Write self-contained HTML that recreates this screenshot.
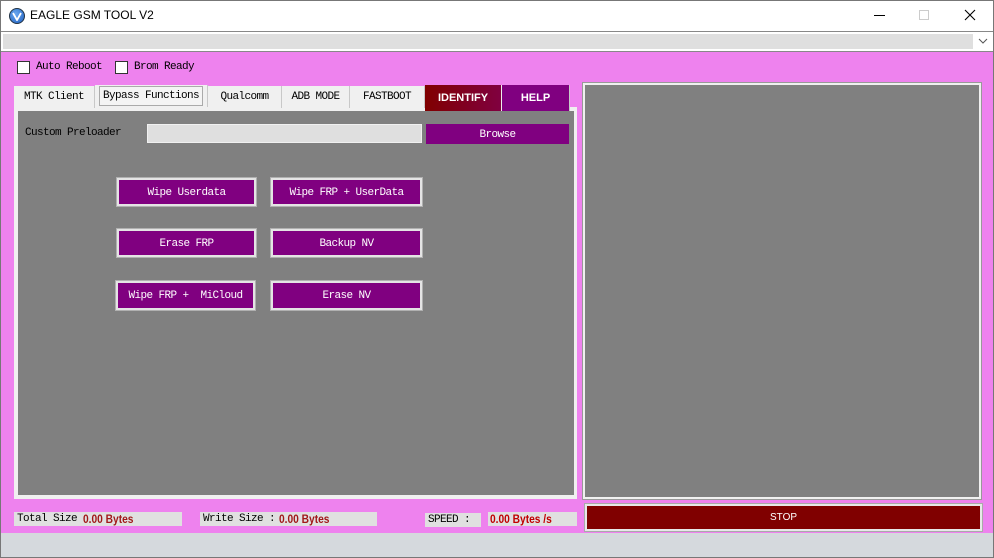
<!DOCTYPE html>
<html><head><meta charset="utf-8"><style>
*{margin:0;padding:0;box-sizing:border-box}
body{width:994px;height:558px;position:relative;overflow:hidden;background:#d5d9dd;font-family:"Liberation Mono",monospace;font-size:11px;letter-spacing:-0.6px;color:#000}
.a{position:absolute}
.btn{position:absolute;background:#800080;color:#fff;border:2px solid #e4e4e4;outline:1px solid #b0b0b0;display:flex;align-items:center;justify-content:center;padding-top:1px}
.tab{position:absolute;top:86px;height:22px;background:#f0f0f0;border-right:1px solid #c8c8c8;display:flex;align-items:center;justify-content:center}
.lbl{position:absolute;background:#e0e0e0;height:14px;top:512px;display:flex;align-items:center;padding-left:3px;white-space:nowrap}
.v{color:#a01818;font-family:"Liberation Sans",sans-serif;font-weight:bold;font-size:12px;letter-spacing:0;margin-left:6px;display:inline-block;transform:scaleX(.85);transform-origin:left}
</style></head><body>
<div class="a" style="left:0;top:0;width:994px;height:558px;border:1px solid #777"></div>
<div class="a" style="left:1px;top:1px;width:992px;height:30px;background:#fff"></div>
<div class="a" style="left:9px;top:8px;width:16px;height:16px;border-radius:50%;background:radial-gradient(circle at 40% 35%,#6aa8f0,#1f5fc0);border:1px solid #234"></div>
<svg class="a" style="left:12px;top:12px" width="10" height="9"><path d="M1 1 L5 8 L9 1" stroke="#fff" stroke-width="1.8" fill="none"/></svg>
<div class="a" style="left:30px;top:8px;font-family:'Liberation Sans',sans-serif;font-size:12px;letter-spacing:0">EAGLE GSM TOOL V2</div>
<div class="a" style="left:874px;top:15px;width:11px;height:1px;background:#000"></div>
<div class="a" style="left:919px;top:10px;width:10px;height:10px;border:1px solid #ccc"></div>
<svg class="a" style="left:964px;top:9px" width="12" height="12"><path d="M1 1L11 11M11 1L1 11" stroke="#000" stroke-width="1.1"/></svg>
<div class="a" style="left:1px;top:31px;width:992px;height:21px;background:#fff;border-top:1px solid #888;border-bottom:1px solid #888"></div>
<div class="a" style="left:3px;top:34px;width:970px;height:15px;background:#dfdfdf"></div>
<svg class="a" style="left:978px;top:38px" width="10" height="6"><path d="M1 1L5 5L9 1" stroke="#555" fill="none"/></svg>
<div class="a" style="left:1px;top:52px;width:992px;height:481px;background:#ee82ee"></div>
<div class="a" style="left:17px;top:61px;width:13px;height:13px;background:#fff;border:1px solid #333"></div>
<div class="a" style="left:36px;top:61px">Auto Reboot</div>
<div class="a" style="left:115px;top:61px;width:13px;height:13px;background:#fff;border:1px solid #333"></div>
<div class="a" style="left:134px;top:61px">Brom Ready</div>
<div class="a" style="left:14px;top:107px;width:563px;height:392px;background:#f0f0f0"></div>
<div class="a" style="left:18px;top:111px;width:556px;height:384px;background:#808080"></div>
<div class="tab" style="left:14px;width:81px">MTK Client</div>
<div class="tab" style="left:95px;width:113px;top:85px"><span style="border:1px solid #aaa;padding:3px 3px;background:#f4f4f4">Bypass Functions</span></div>
<div class="tab" style="left:208px;width:74px">Qualcomm</div>
<div class="tab" style="left:282px;width:68px">ADB MODE</div>
<div class="tab" style="left:350px;width:75px">FASTBOOT</div>
<div class="tab" style="left:425px;top:85px;height:26px;width:77px;background:linear-gradient(90deg,#800000,#800040);color:#fff;font-family:'Liberation Sans',sans-serif;font-weight:bold;font-size:11px;letter-spacing:0;border-right:1px solid #eee">IDENTIFY</div>
<div class="tab" style="left:502px;top:85px;height:26px;width:68px;background:#800080;color:#fff;font-family:'Liberation Sans',sans-serif;font-weight:bold;font-size:11px;letter-spacing:0">HELP</div>
<div class="a" style="left:25px;top:127px">Custom Preloader</div>
<div class="a" style="left:147px;top:124px;width:275px;height:19px;background:#dfdfdf;border:1px solid #f0f0f0"></div>
<div class="a" style="left:426px;top:124px;width:143px;height:20px;background:#800080;color:#fff;display:flex;align-items:center;justify-content:center;padding-top:2px">Browse</div>
<div class="btn" style="left:117px;top:178px;width:139px;height:28px">Wipe Userdata</div>
<div class="btn" style="left:271px;top:178px;width:151px;height:28px">Wipe FRP + UserData</div>
<div class="btn" style="left:117px;top:229px;width:139px;height:28px">Erase FRP</div>
<div class="btn" style="left:271px;top:229px;width:151px;height:28px">Backup NV</div>
<div class="btn" style="left:116px;top:281px;width:139px;height:29px">Wipe FRP + &nbsp;MiCloud</div>
<div class="btn" style="left:271px;top:281px;width:151px;height:29px">Erase NV</div>
<div class="a" style="left:583px;top:83px;width:398px;height:416px;background:#808080;border:2px solid #f0f0f0;outline:1px solid #999"></div>
<div class="lbl" style="left:14px;width:168px">Total Size<span class="v">0.00 Bytes</span></div>
<div class="lbl" style="left:200px;width:177px">Write Size :<span class="v" style="margin-left:4px">0.00 Bytes</span></div>
<div class="lbl" style="left:425px;width:56px;top:513px">SPEED :</div>
<div class="lbl" style="left:488px;width:89px;top:512px;padding-left:2px"><span class="v" style="margin-left:0;color:#c00000">0.00 Bytes /s</span></div>
<div class="a" style="left:585px;top:504px;width:397px;height:27px;background:#800000;border:2px solid #e8e8e8;outline:1px solid #aaa;color:#fff;font-family:'Liberation Sans',sans-serif;font-size:10px;letter-spacing:0;display:flex;align-items:center;justify-content:center">STOP</div>
</body></html>
